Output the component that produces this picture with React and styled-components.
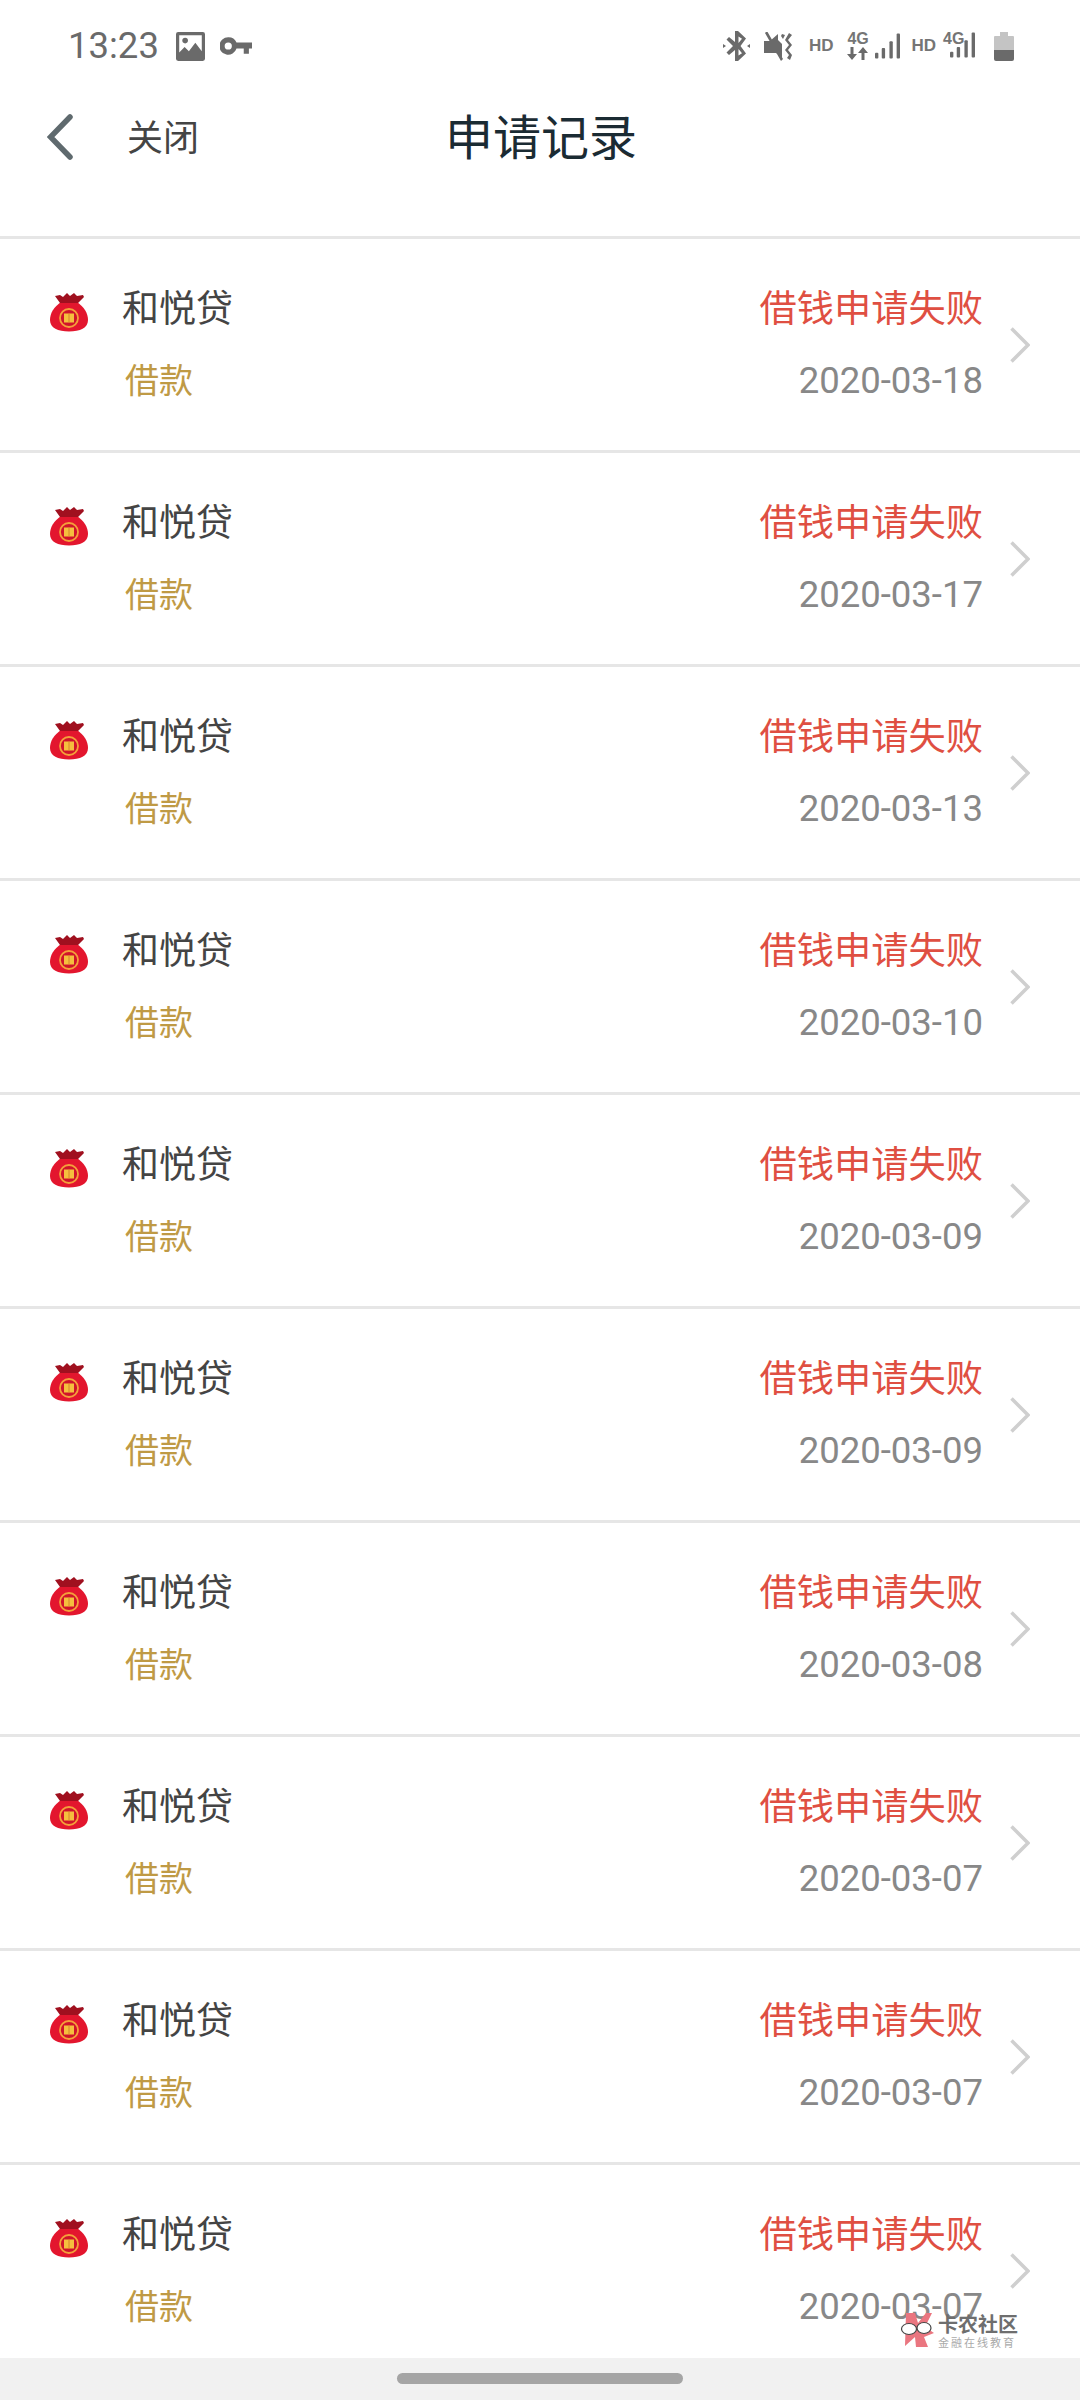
import React from 'react';
import styled, { createGlobalStyle } from 'styled-components';

const Global = createGlobalStyle`
  html, body { margin: 0; padding: 0; background: #fff; }
  body { font-family: "Roboto", "Noto Sans CJK SC", sans-serif; }
`;

const CJK = `"Noto Sans CJK SC", "Roboto", sans-serif`;

const Page = styled.div`
  width: 1080px;
  height: 2400px;
  display: flex;
  flex-direction: column;
  position: relative;
  overflow: hidden;
  background: #fff;
`;
const Content = styled.div`
  flex: 1;
  min-height: 0;
  overflow: hidden;
`;
const StatusBar = styled.div`
  height: 92px;
  box-sizing: border-box;
  padding: 24px 66px 0 68px;
  display: flex;
  align-items: flex-start;
  justify-content: space-between;
  color: #666;
`;
const StatusLeft = styled.div`
  display: flex;
  align-items: center;
  height: 44px;
`;
const Time = styled.span`
  font: 400 36.5px/44px "Roboto", sans-serif;
  color: #6a6a6a;
  width: 108px;
`;
const StatusRight = styled.div`
  display: flex;
  align-items: center;
  height: 44px;
`;
const Hd = styled.span`
  font: 700 17px/20px "Liberation Sans", sans-serif;
  color: #757575;
  margin-left: ${p => p.$ml}px;
`;
const StatusIcon = styled.svg`
  display: block;
  flex: none;
  fill: #6a6a6a;
  margin-left: ${p => p.$ml || 0}px;
`;
const NetWrap = styled.div`
  position: relative;
  width: ${p => p.$w}px;
  height: 30px;
  margin-left: ${p => p.$ml}px;
`;
const NetLabel = styled.span`
  position: absolute;
  left: 0;
  top: 0;
  font: 700 16px/15px "Liberation Sans", sans-serif;
  color: #757575;
`;
const NetArrows = styled.svg`
  position: absolute;
  left: 0;
  top: 16px;
  display: block;
  fill: #6a6a6a;
`;
const NetBars = styled.svg`
  position: absolute;
  left: 7px;
  top: 1px;
  display: block;
  fill: #6a6a6a;
`;
const NavBar = styled.div`
  height: 144px;
  box-sizing: border-box;
  display: flex;
  align-items: flex-start;
  position: relative;
  padding-left: 47px;
  padding-top: 22px;
`;
const Back = styled.svg`
  display: block;
  width: 26px;
  height: 46px;
  fill: none;
  stroke: #5f6a6e;
  stroke-width: 5.5;
  stroke-linecap: round;
  stroke-linejoin: miter;
`;
const Close = styled.span`
  font: 400 36px/44px ${CJK};
  color: #444;
  margin-left: 54px;
  margin-top: -1px;
`;
const Title = styled.h1`
  position: absolute;
  left: 0;
  right: 0;
  top: 14px;
  margin: 0;
  text-align: center;
  font: 400 48px/56px ${CJK};
  color: #1b2b33;
  transform: translateX(1px);
`;
const Row = styled.div`
  height: 214px;
  box-sizing: border-box;
  border-top: 3px solid #e6e6e6;
  display: flex;
  align-items: center;
  padding: 0 50px;
`;
const Info = styled.div`
  flex: 1;
  align-self: flex-start;
  display: flex;
  flex-direction: column;
  gap: 1px;
  padding-top: 30px;
  padding-right: 27px;
`;
const Line = styled.div`
  height: 73px;
  display: flex;
  align-items: center;
  justify-content: space-between;
`;
const Name = styled.div`
  display: flex;
  align-items: center;
`;
const Bag = styled.svg`
  display: block;
  width: 38px;
  height: 40px;
  margin-right: 34px;
  margin-top: 12px;
`;
const NameText = styled.span`
  font: 400 37px/72px ${CJK};
  color: #444;
`;
const Category = styled.span`
  font: 400 34px/72px ${CJK};
  color: #bf9a45;
  margin-left: 75px;
  padding-bottom: 2px;
`;
const Status = styled.span`
  font: 400 37.25px/72px ${CJK};
  color: #df4f42;
`;
const DateText = styled.span`
  font: 400 36.5px/72px "Roboto", sans-serif;
  color: #888;
  padding-top: 2px;
`;
const Chevron = styled.svg`
  display: block;
  width: 20px;
  height: 36px;
  fill: none;
  stroke: #cfcfcf;
  stroke-width: 3.5;
  flex: none;
`;
const BottomBar = styled.div`
  height: 42px;
  flex: none;
  background: #f1f1f1;
  display: flex;
  justify-content: center;
  padding-top: 15px;
  box-sizing: border-box;
`;
const Pill = styled.div`
  width: 286px;
  height: 11px;
  border-radius: 6px;
  background: #a5a5a5;
`;
const Watermark = styled.div`
  position: absolute;
  left: 900px;
  top: 2313px;
  display: flex;
  align-items: center;
  gap: 2px;
`;
const WmLogo = styled.svg`
  display: block;
  width: 36px;
  height: 36px;
  flex: none;
`;
const WmText = styled.div`
  display: flex;
  flex-direction: column;
  gap: 1px;
`;
const WmTitle = styled.span`
  font: 700 20px/22px ${CJK};
  color: #6e6e6e;
`;
const WmSub = styled.span`
  font: 400 11px/13px ${CJK};
  color: #aaa;
  letter-spacing: 2px;
`;

const dates = ['2020-03-18','2020-03-17','2020-03-13','2020-03-10','2020-03-09','2020-03-09','2020-03-08','2020-03-07','2020-03-07','2020-03-07'];

const MoneyBag = () => (
  <Bag viewBox="0 0 38 40">
    <path d="M11 10 C4 15 0 21 0 28 C0 36 8 39.5 19 39.5 C30 39.5 38 36 38 28 C38 21 34 15 27 10 Z" fill="#e3162e" />
    <path d="M5 4 L10 3 L13 5 L17 1 L20 4 L24 1 L27 4 L33 3 L34 5 L28 11 H10 Z" fill="#a0101f" />
    <circle cx="19" cy="26" r="9" fill="#d0132b" stroke="#f4a03a" strokeWidth="1.8" />
    <rect x="14" y="21.5" width="10" height="9" fill="#f5bf3e" />
    <path d="M19 21.5 V30.5" stroke="#d8832a" strokeWidth="1" />
  </Bag>
);

const ListRow = ({ date }) => (
  <Row>
    <Info>
      <Line>
        <Name><MoneyBag /><NameText>和悦贷</NameText></Name>
        <Status>借钱申请失败</Status>
      </Line>
      <Line>
        <Category>借款</Category>
        <DateText>{date}</DateText>
      </Line>
    </Info>
    <Chevron viewBox="0 0 20 36"><path d="M1.5 1.5 L18 18 L1.5 34.5" /></Chevron>
  </Row>
);

const Bars = () => (
  <>
    <rect x="0" y="20" width="3.5" height="6" rx="1" />
    <rect x="7" y="15" width="3.5" height="11" rx="1" />
    <rect x="15" y="8" width="3.5" height="18" rx="1" />
    <rect x="22.5" y="0" width="3.5" height="26" rx="1" />
  </>
);

export default function App() {
  return (
    <Page>
      <Global />
      <Content>
        <StatusBar>
          <StatusLeft>
            <Time>13:23</Time>
            <StatusIcon width="29" height="29" viewBox="0 0 27 27">
              <path fillRule="evenodd" d="M2 0H25a2 2 0 0 1 2 2V25a2 2 0 0 1-2 2H2a2 2 0 0 1-2-2V2a2 2 0 0 1 2-2ZM3 3V19L8 14L12 18L18 10L24 18V3Z" />
              <circle cx="8.5" cy="8" r="2.6" />
            </StatusIcon>
            <StatusIcon $ml={15} width="32" height="18" viewBox="0 0 31 17">
              <path fillRule="evenodd" d="M8 0a8.5 8.5 0 0 1 8 5H31V11H28V16H23V11H16a8.5 8.5 0 1 1-8-11ZM8 5a3.5 3.5 0 1 0 0 7a3.5 3.5 0 0 0 0-7Z" />
            </StatusIcon>
          </StatusLeft>
          <StatusRight>
            <StatusIcon width="27" height="30" viewBox="0 0 27 30">
              <path fillRule="evenodd" d="M12 0H15L23 7.5L17.5 15L23 22.5L15 30H12V19L6 24L3.5 21.5L10 15L3.5 8.5L6 6L12 11ZM15.5 5.5V12L19 7.8ZM15.5 18V24.5L19 22.2Z" />
              <path d="M0 13L3 15L0 17ZM27 13L24 15L27 17Z" />
            </StatusIcon>
            <StatusIcon $ml={14} width="31" height="29" viewBox="0 0 31 29">
              <path d="M0 9H6L14 2V8L18 12V27L12 21H0ZM1 1L3 -1L19 27L17 29Z" />
              <path d="M25 1L28 3L24 8L28 13L24 18L28 23L26 28L23 26L25 23L21 18L25 13L21 8Z" />
              <path d="M18 2L21 3L19 7L17 4Z" />
            </StatusIcon>
            <Hd $ml={14}>HD</Hd>
            <NetWrap $w={21} $ml={14}>
              <NetLabel>4G</NetLabel>
              <NetArrows width="21" height="13" viewBox="0 0 21 13">
                <path d="M3.5 0H6.5V7H10L5 13L0 7H3.5ZM14.5 13H17.5V6H21L16 0L11 6H14.5Z" />
              </NetArrows>
            </NetWrap>
            <StatusIcon $ml={7} width="25" height="26" viewBox="0 0 26 26"><Bars /></StatusIcon>
            <Hd $ml={11}>HD</Hd>
            <NetWrap $w={32} $ml={7}>
              <NetLabel>4G</NetLabel>
              <NetBars width="25" height="26" viewBox="0 0 26 26"><Bars /></NetBars>
            </NetWrap>
            <StatusIcon $ml={19} width="20" height="29" viewBox="0 0 20 29">
              <path d="M6 0H14V4H19a1 1 0 0 1 1 1V18H0V5a1 1 0 0 1 1-1H6Z" fill="#c4c4c4" />
              <path d="M0 18H20V27a2 2 0 0 1-2 2H2a2 2 0 0 1-2-2Z" fill="#6a6a6a" />
            </StatusIcon>
          </StatusRight>
        </StatusBar>
        <NavBar>
          <Back viewBox="0 0 26 46"><path d="M23 3 L3.5 23 L23 43" /></Back>
          <Close>关闭</Close>
          <Title>申请记录</Title>
        </NavBar>
        {dates.map((d, i) => <ListRow key={i} date={d} />)}
      </Content>
      <BottomBar><Pill /></BottomBar>
      <Watermark>
        <WmLogo viewBox="0 0 36 36">
          <path d="M6 0H15L18 10L26 0H32L25 14L34 20L24 24L28 34H16L15 24L5 33Z" fill="#ea7680" />
          <ellipse cx="9" cy="16" rx="7.5" ry="5.5" fill="#fff" stroke="#444" strokeWidth="1.2" />
          <ellipse cx="24" cy="15" rx="7" ry="5.5" fill="#fff" stroke="#444" strokeWidth="1.2" />
        </WmLogo>
        <WmText>
          <WmTitle>卡农社区</WmTitle>
          <WmSub>金融在线教育</WmSub>
        </WmText>
      </Watermark>
    </Page>
  );
}
